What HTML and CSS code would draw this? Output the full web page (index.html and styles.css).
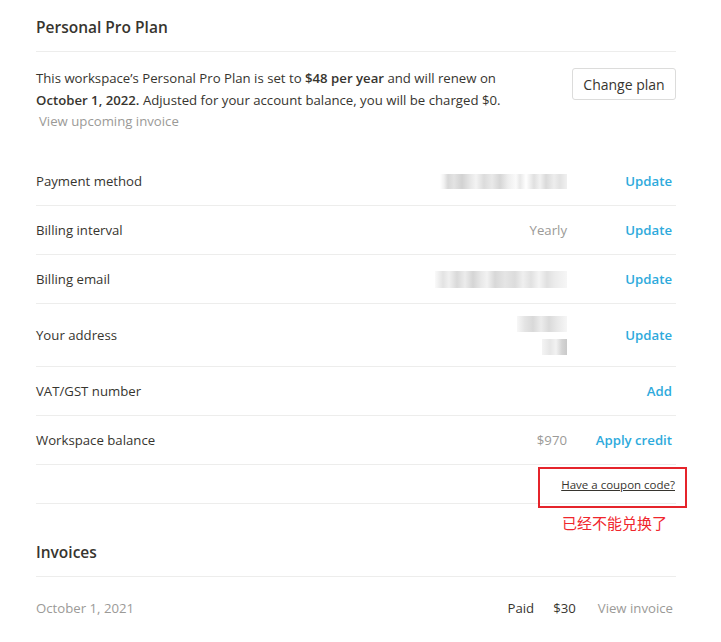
FILE: index.html
```html
<!DOCTYPE html>
<html>
<head>
<meta charset="utf-8">
<link rel="stylesheet" href="styles.css">
</head>
<body>
<div class="page">
  <div class="section-title">Personal Pro Plan</div>
  <div class="plan">
    <div class="plan-text">
      <p>This workspace’s Personal Pro Plan is set to <b>$48 per year</b> and will renew on <b>October 1, 2022.</b> Adjusted for your account balance, you will be charged $0.</p>
      <div class="muted-link">View upcoming invoice</div>
    </div>
    <button class="btn">Change plan</button>
  </div>

  <div class="rows">
    <div class="row">
      <div class="label">Payment method</div>
      <div class="value"><span class="blur blur-pay"></span></div>
      <div class="action">Update</div>
    </div>
    <div class="row">
      <div class="label">Billing interval</div>
      <div class="value">Yearly</div>
      <div class="action">Update</div>
    </div>
    <div class="row">
      <div class="label">Billing email</div>
      <div class="value"><span class="blur blur-mail"></span></div>
      <div class="action">Update</div>
    </div>
    <div class="row row-tall">
      <div class="label">Your address</div>
      <div class="value value-stack"><span class="blur blur-addr1"></span><span class="blur blur-addr2"></span></div>
      <div class="action">Update</div>
    </div>
    <div class="row">
      <div class="label">VAT/GST number</div>
      <div class="value"></div>
      <div class="action">Add</div>
    </div>
    <div class="row">
      <div class="label">Workspace balance</div>
      <div class="value">$970</div>
      <div class="action">Apply credit</div>
    </div>
    <div class="row row-coupon">
      <span class="coupon">Have a coupon code?</span>
      <div class="redbox"></div>
      <div class="note">已经不能兑换了</div>
    </div>
  </div>

  <div class="section-title invoices-title">Invoices</div>
  <div class="invoice">
    <div class="inv-date">October 1, 2021</div>
    <div class="inv-status">Paid</div>
    <div class="inv-amount">$30</div>
    <div class="inv-link">View invoice</div>
  </div>
</div>
</body>
</html>
```
FILE: styles.css
```css
* { box-sizing: border-box; }
html, body { margin: 0; padding: 0; background: #fff; }
body {
  font-family: "Open Sans", "Noto Sans CJK SC", sans-serif;
  font-size: 13.2px;
  color: #37352f;
}
.page {
  width: 640px;
  margin-left: 36px;
}
.section-title {
  font-size: 15.5px;
  font-weight: 600;
  line-height: 22px;
  padding: 16px 0 13px;
  border-bottom: 1px solid #ededec;
}
.plan {
  display: flex;
  justify-content: space-between;
  align-items: flex-start;
  padding-top: 15px;
}
.plan-text p {
  margin: 0;
  width: 480px;
  line-height: 22px;
}
.plan-text b { font-weight: 600; }
.muted-link {
  color: #9b9a97;
  line-height: 22px;
  margin-top: -1px;
  padding-left: 3px;
}
.btn {
  font-family: inherit;
  font-size: 14px;
  color: #37352f;
  background: #fff;
  border: 1px solid #dcdcdb;
  border-radius: 3px;
  height: 32px;
  width: 104px;
  margin-top: 1px;
  padding: 0;
}
.rows { margin-top: 25px; }
.row {
  display: flex;
  align-items: center;
  height: 49px;
  border-bottom: 1px solid #ededec;
  position: relative;
}
.row-tall { height: 63px; }
.label { flex: 1; }
.value {
  color: #9b9a97;
  display: flex;
  justify-content: flex-end;
}
.value-stack {
  flex-direction: column;
  align-items: flex-end;
  gap: 7px;
}
.action {
  width: 109px;
  padding-right: 4px;
  text-align: right;
  color: #2eaadc;
  font-weight: 600;
}
.blur {
  display: block;
  height: 15px;
}
.blur-pay {
  width: 127px;
  background: linear-gradient(90deg,
    #fff 0, #f1f1f1 4px, #d8d8d8 8px, #e3e3e3 14px, #d2d2d2 22px, #e6e6e6 30px,
    #f3f3f3 36px, #dcdcdc 44px, #e9e9e9 52px, #d6d6d6 60px, #eeeeee 68px, #fafafa 76px,
    #e8e8e8 80px, #ffffff 86px, #e0e0e0 94px, #f2f2f2 100px, #dadada 106px, #ededed 114px, #e2e2e2 120px, #f0f0f0 127px);
}
.blur-mail {
  width: 132px;
  height: 17px;
  background: linear-gradient(90deg,
    #fafafa 0, #e3e3e3 8px, #f0f0f0 14px, #d9d9d9 22px, #ececec 30px, #d5d5d5 38px,
    #e8e8e8 46px, #f2f2f2 52px, #d8d8d8 60px, #e5e5e5 70px, #dcdcdc 80px, #efefef 88px,
    #e1e1e1 96px, #f4f4f4 104px, #e0e0e0 112px, #ececec 120px, #f6f6f6 132px);
}
.blur-addr1 {
  width: 50px;
  height: 16px;
  background: linear-gradient(90deg,
    #f7f7f7 0, #e4e4e4 8px, #d9d9d9 16px, #ececec 24px, #dadada 32px, #e8e8e8 40px, #f6f6f6 50px);
}
.blur-addr2 {
  width: 25px;
  height: 16px;
  background: linear-gradient(90deg,
    #f4f4f4 0, #e6e6e6 8px, #f2f2f2 14px, #d4d4d4 20px, #c9c9c9 25px);
}
.row-coupon {
  height: 39px;
  justify-content: flex-end;
}
.coupon {
  font-size: 11.5px;
  text-decoration: underline;
  margin-right: 1px;
}
.redbox {
  position: absolute;
  left: 502px;
  top: 2px;
  width: 149px;
  height: 41px;
  border: 2px solid #e5242b;
}
.note {
  position: absolute;
  left: 526px;
  top: 47px;
  color: #f0262d;
  font-family: "Noto Sans CJK SC", sans-serif;
  font-size: 15px;
  line-height: 22px;
  white-space: nowrap;
}
.invoices-title {
  padding-top: 37px;
}
.invoice {
  display: flex;
  align-items: center;
  height: 62px;
}
.inv-date { flex: 1; color: #9b9a97; }
.inv-status { margin-right: 19px; }
.inv-amount { margin-right: 22px; }
.inv-link { color: #9b9a97; margin-right: 3px; }
```
